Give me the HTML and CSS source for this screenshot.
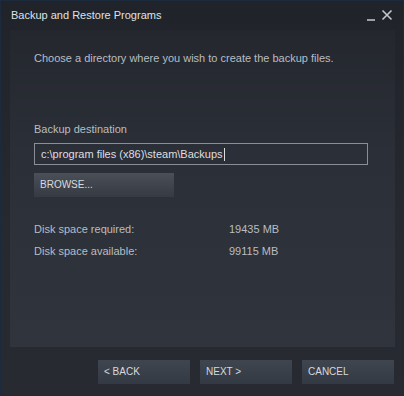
FILE: index.html
```html
<!DOCTYPE html>
<html>
<head>
<meta charset="utf-8">
<title>Backup and Restore Programs</title>
<link rel="stylesheet" href="styles.css">
</head>
<body>
<div class="window">
  <div class="titlebar">
    <span class="title">Backup and Restore Programs</span>
    <div class="controls">
      <svg class="ctl" width="10" height="12" viewBox="0 0 10 12"><rect x="1" y="10" width="8" height="2" fill="#9aa0a6"/></svg>
      <svg class="ctl" width="12" height="12" viewBox="0 0 12 12"><path d="M1.5 1.5 L10.5 10.5 M10.5 1.5 L1.5 10.5" stroke="#c4c8cc" stroke-width="1.6"/></svg>
    </div>
  </div>

  <div class="panel">
    <p class="intro">Choose a directory where you wish to create the backup files.</p>

    <div class="label">Backup destination</div>
    <div class="input">c:\program files (x86)\steam\Backups<span class="caret"></span></div>
    <div class="browse">BROWSE...</div>

    <div class="space">
      <div class="row"><span class="key">Disk space required:</span><span>19435 MB</span></div>
      <div class="row"><span class="key">Disk space available:</span><span>99115 MB</span></div>
    </div>
  </div>

  <div class="footer">
    <div class="btn">&lt; BACK</div>
    <div class="btn">NEXT &gt;</div>
    <div class="btn">CANCEL</div>
  </div>
</div>
</body>
</html>
```

FILE: styles.css
```css
html, body {
  margin: 0;
  padding: 0;
  background: #1e2127;
}

body {
  font-family: "Liberation Sans", Arial, sans-serif;
  font-size: 11px;
  color: #b9bdc2;
}

.window {
  box-sizing: border-box;
  width: 404px;
  height: 396px;
  border: 1px solid #1b2a3c;
  background: linear-gradient(#202329, #262a30 60%, #272a31);
  display: flex;
  flex-direction: column;
}

.titlebar {
  height: 29px;
  display: flex;
  align-items: center;
  justify-content: space-between;
  padding: 0 10px 0 10px;
}

.title {
  color: #dfe2e5;
  font-size: 11px;
  margin-top: -1px;
}

.controls {
  display: flex;
  align-items: center;
  gap: 5px;
  margin-top: -2px;
}

.ctl {
  display: block;
}

.panel {
  margin: 0 8px 0 9px;
  flex: 1;
  background: linear-gradient(#24272e, #2b2f37 40%, #30343c);
  padding: 21px 24px 0 24px;
}

.intro {
  margin: 0;
  line-height: 14px;
}

.label {
  margin-top: 57px;
  line-height: 14px;
}

.input {
  margin-top: 7px;
  width: 334px;
  height: 22px;
  box-sizing: border-box;
  border: 1px solid #8a8f96;
  padding: 0 6px;
  line-height: 20px;
  color: #dcdfe2;
  display: flex;
  align-items: center;
}

.caret {
  display: inline-block;
  width: 1px;
  height: 13px;
  background: #dcdfe2;
  margin-left: 1px;
}

.browse {
  margin-top: 8px;
  width: 140px;
  height: 24px;
  box-sizing: border-box;
  padding-left: 6px;
  line-height: 24px;
  font-size: 10px;
  color: #d8dbde;
  background: linear-gradient(#4a4f58, #363a42);
}

.space {
  margin-top: 25px;
  display: flex;
  flex-direction: column;
  gap: 8px;
}

.row {
  display: flex;
  line-height: 14px;
}

.key {
  width: 195px;
}

.footer {
  height: 48px;
  display: flex;
  justify-content: flex-end;
  gap: 10px;
  padding: 13px 9px 0 0;
  box-sizing: border-box;
}

.btn {
  flex-shrink: 0;
  width: 92px;
  height: 24px;
  box-sizing: border-box;
  padding-left: 6px;
  line-height: 24px;
  font-size: 10px;
  color: #d6dade;
  background: linear-gradient(#3f4650, #343a43);
}
```
